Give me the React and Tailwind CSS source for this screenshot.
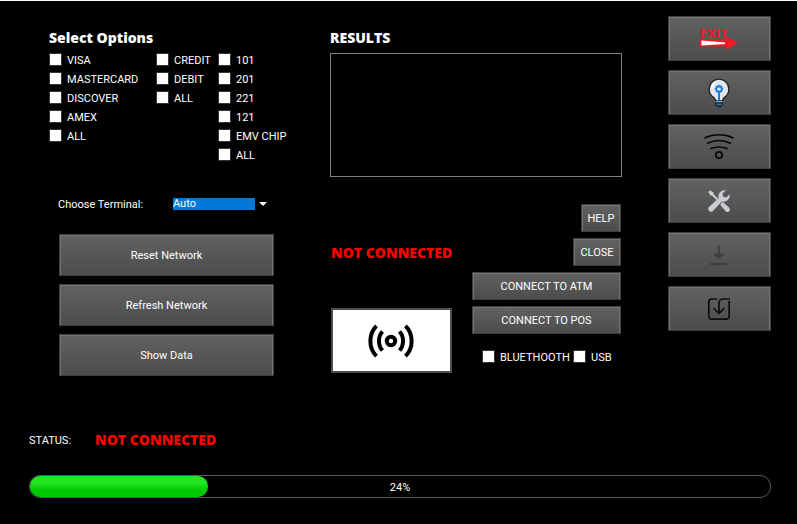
const panelButton =
  "flex items-center justify-center border border-[#3f3f3f] bg-linear-to-b from-[#626262] to-[#4c4c4c] text-white shadow-[inset_1px_1px_0_#737373,inset_-1px_0_0_#737373] active:from-[#4c4c4c] active:to-[#4c4c4c]";
const textButton = `${panelButton} pt-0.5`;
const iconButton = `${panelButton} pr-0.5`;

function Check({ label }) {
  return (
    <label className="flex h-[19px] items-center gap-[5px] whitespace-nowrap">
      <input
        type="checkbox"
        className="size-[13px] shrink-0 appearance-none border border-[#333333] bg-white checked:bg-[#0078d7]"
      />
      <span className="pt-0.5">{label}</span>
    </label>
  );
}

function CheckColumn({ items }) {
  return (
    <div>
      {items.map((item) => (
        <Check key={item} label={item} />
      ))}
    </div>
  );
}

function Heading({ children }) {
  return <h2 className="h-5 font-['Open_Sans',sans-serif] text-[14px] leading-5 font-extrabold">{children}</h2>;
}

function NotConnected() {
  return (
    <span className="font-['Open_Sans',sans-serif] text-[14px] leading-5 font-extrabold whitespace-nowrap text-[#ff0000]">
      NOT CONNECTED
    </span>
  );
}

function ExitIcon() {
  return (
    <svg width="40" height="34" viewBox="0 -4 40 34">
      <text x="1" y="12" fill="#ed1c24" fontSize="13" fontFamily="Open Sans, sans-serif" fontWeight="700">
        EXIT
      </text>
      <path d="M1 13.500H27V10L39 17L27 24V20.500H1Z" fill="#ed1c24" />
      <path d="M2.500 14.500L26 16.500V18L2.500 19.500Z" fill="#fff" />
    </svg>
  );
}

function BulbIcon() {
  return (
    <svg width="22" height="30" viewBox="0 0 22 30">
      <path
        d="M11 1.200A9.800 9.800 0 0 0 1.200 11c0 4.300 2.300 7.200 5 8.900.9.700 1.300 1.700 1.300 3.100h7c0-1.400.4-2.400 1.300-3.100 2.700-1.700 5-4.600 5-8.900A9.800 9.800 0 0 0 11 1.200Z"
        fill="#e4e6ee"
        stroke="#202226"
        strokeWidth="1.300"
      />
      <path d="M4 9.500C4.500 7 6 5.200 8 4.500" stroke="#fff" strokeWidth="1.500" fill="none" />
      <path d="M11 14V23" stroke="#1680e0" strokeWidth="2" />
      <circle cx="11" cy="11" r="2.700" fill="none" stroke="#1680e0" strokeWidth="2" />
      <path
        d="M11 6.800v8.400M6.800 11h1.700M13.500 11h1.700M8 8l1.200 1.200M14 8l-1.200 1.200M8 14l1.200-1.200M14 14l-1.200-1.200"
        stroke="#1680e0"
        strokeWidth="1.500"
      />
      <circle cx="11" cy="11" r="1.600" fill="#e4e6ee" />
      <path d="M7.500 23h7v3.500l-1.500 2.200H9l-1.500-2.200Z" fill="#20344c" stroke="#202226" />
      <path d="M7.500 23.500h7" stroke="#9aa0a8" strokeWidth="1.300" />
      <path d="M9 26.500h4.500" stroke="#1680e0" strokeWidth="1.200" />
    </svg>
  );
}

function WifiIcon() {
  return (
    <svg width="32" height="28" viewBox="0 0 32 28" fill="none" stroke="#080808" strokeWidth="1.500" strokeLinecap="round">
      <path d="M1.800 5C10.500 0.800 21.500 0.800 30.200 5" />
      <path d="M4.500 10.200C11.500 7 20.500 7 27.500 10.200" />
      <path d="M7.800 15.500C13 13.500 19 13.500 24.200 15.500" />
      <circle cx="16" cy="22" r="3.200" strokeWidth="1.800" />
    </svg>
  );
}

function ToolsIcon() {
  return (
    <svg width="24" height="24" viewBox="0 0 24 24" fill="#c9ccd0">
      <path d="M1.200 3L3 1.200L6.300 3.400L6.900 5.400L11 9.500L9.500 11L5.400 6.900L3.400 6.300Z" />
      <path d="M13.200 15.200L15.400 13L17.300 14.300L22.200 18.800A2.300 2.300 0 0 1 18.800 22.200L14.300 17.300Z" />
      <path d="M22.700 5.200L19.400 8.500L16.200 7.800L15.500 4.600L18.800 1.300A6.300 6.300 0 0 0 11.600 9.200L1.700 18.300A2.900 2.900 0 0 0 5.700 22.300L14.800 12.400A6.300 6.300 0 0 0 22.700 5.200Z" />
    </svg>
  );
}

function DownloadIcon() {
  return (
    <svg width="20" height="22" viewBox="0 0 20 22" fill="#404040" stroke="#404040" strokeLinecap="round" strokeLinejoin="round">
      <path d="M10 2V11" strokeWidth="2.200" />
      <path d="M6 10.500H14L10 14.500Z" strokeWidth="2" />
      <path d="M2.200 20H17.800" strokeWidth="2.400" />
    </svg>
  );
}

function ImportIcon() {
  return (
    <svg width="24" height="24" viewBox="0 0 24 24" fill="none" stroke="#0c0c0c" strokeWidth="1.700" strokeLinecap="round" strokeLinejoin="round">
      <path d="M9.500 2H4.500A3 3 0 0 0 1.800 5V19.500A2.700 2.700 0 0 0 4.500 22.200H19.500A2.700 2.700 0 0 0 22.200 19.500V4.500" />
      <path d="M22.200 2H16A4 4 0 0 0 12 6V16" />
      <path d="M7 11.500L12 16.500L17 11.500" />
    </svg>
  );
}

function SignalIcon() {
  return (
    <svg width="48" height="36" viewBox="0 0 48 36" fill="none" stroke="#000" strokeWidth="4">
      <circle cx="24" cy="18" r="4.200" />
      <path d="M15.500 8.500C10.800 13.500 10.800 22.500 15.500 27.500" />
      <path d="M32.500 8.500C37.200 13.500 37.200 22.500 32.500 27.500" />
      <path d="M9.500 2.800C1.300 11 1.300 25 9.500 33.200" />
      <path d="M38.500 2.800C46.700 11 46.700 25 38.500 33.200" />
    </svg>
  );
}

const tools = [
  { name: "Exit", Icon: ExitIcon },
  { name: "Tips", Icon: BulbIcon },
  { name: "Wireless", Icon: WifiIcon },
  { name: "Settings", Icon: ToolsIcon },
  { name: "Download", Icon: DownloadIcon, disabled: true },
  { name: "Import", Icon: ImportIcon },
];

const progress = 24;

export default function App() {
  return (
    <main className="min-h-screen border-t border-white bg-black pr-[26px] pb-6 font-['Roboto',sans-serif] text-[11px] leading-4 text-white">
      <div className="grid grid-cols-[235px_1fr_103px] gap-x-[46px] pl-[49px]">
        <section className="pt-[27px]">
          <Heading>Select Options</Heading>
          <div className="mt-0.5 grid grid-cols-[107px_62px_1fr]">
            <CheckColumn items={["VISA", "MASTERCARD", "DISCOVER", "AMEX", "ALL"]} />
            <CheckColumn items={["CREDIT", "DEBIT", "ALL"]} />
            <CheckColumn items={["101", "201", "221", "121", "EMV CHIP", "ALL"]} />
          </div>
          <div className="mt-8 flex h-4 items-center pl-[9px]">
            <label htmlFor="terminal" className="w-[115px] pt-0.5">
              Choose Terminal:
            </label>
            <select
              id="terminal"
              className="h-3 w-[82px] appearance-none bg-[#0078d7] p-0 leading-3 text-white outline-none"
            >
              <option>Auto</option>
            </select>
            <svg width="8" height="4" viewBox="0 0 8 4" className="ml-1">
              <path d="M0 0H8L4 4Z" fill="#fff" />
            </svg>
          </div>
          <div className="mt-[22px] mr-2.5 ml-2.5 flex flex-col gap-2">
            {["Reset Network", "Refresh Network", "Show Data"].map((name) => (
              <button key={name} className={`${textButton} h-[42px]`}>
                {name}
              </button>
            ))}
          </div>
        </section>

        <section className="pt-[27px]">
          <Heading>RESULTS</Heading>
          <output className="mt-[5px] block h-[124px] border border-[#808080]" />
          <div className="mt-[27px] flex justify-between px-px">
            <div className="flex flex-col pt-[39px]">
              <NotConnected />
              <button
                aria-label="Scan"
                className="mt-[45px] flex h-[65px] w-[121px] items-center justify-center border-2 border-[#4d4d4d] bg-white pr-0.5"
              >
                <SignalIcon />
              </button>
            </div>
            <div className="flex flex-col items-end gap-1.5">
              <button className={`${textButton} h-7 w-10`}>HELP</button>
              <button className={`${textButton} h-7 w-12`}>CLOSE</button>
              <button className={`${textButton} h-7 w-[149px]`}>CONNECT TO ATM</button>
              <button className={`${textButton} h-7 w-[149px]`}>CONNECT TO POS</button>
              <div className="mt-[7px] grid w-[139px] grid-cols-[91px_1fr]">
                <Check label="BLUETHOOTH" />
                <Check label="USB" />
              </div>
            </div>
          </div>
        </section>

        <nav className="flex flex-col gap-[9px] pt-[15px]">
          {tools.map(({ name, Icon, disabled }) => (
            <button key={name} aria-label={name} disabled={disabled} className={`${iconButton} h-[45px]`}>
              <Icon />
            </button>
          ))}
        </nav>
      </div>

      <footer className="mt-[54px] pl-[29px]">
        <div className="flex h-5 items-center">
          <span className="w-[66px] pt-0.5">STATUS:</span>
          <NotConnected />
        </div>
        <div
          role="progressbar"
          aria-label="Progress"
          aria-valuenow={progress}
          aria-valuemin={0}
          aria-valuemax={100}
          className="mt-[25px] grid h-[23px] items-center rounded-[11px] border border-[#5a5a5a]"
        >
          <div
            className="col-start-1 row-start-1 h-[21px] rounded-[10px] bg-linear-to-b from-[#20e820] from-30% to-[#00c800] to-70%"
            style={{ width: `${progress}%` }}
          />
          <span className="col-start-1 row-start-1 pt-0.5 text-center">{progress}%</span>
        </div>
      </footer>
    </main>
  );
}
